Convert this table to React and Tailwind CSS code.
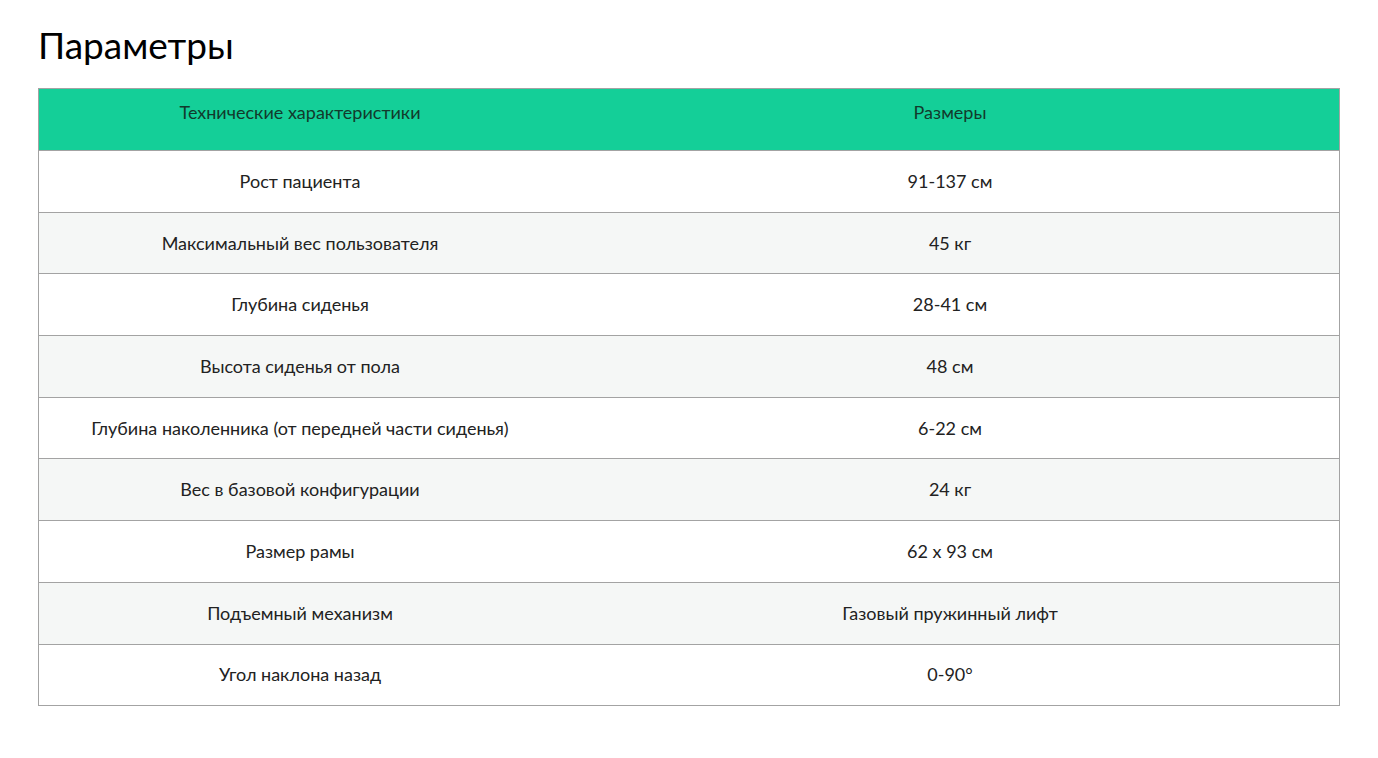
import React from "react";

const rows = [
  ["Рост пациента", "91-137 см"],
  ["Максимальный вес пользователя", "45 кг"],
  ["Глубина сиденья", "28-41 см"],
  ["Высота сиденья от пола", "48 см"],
  ["Глубина наколенника (от передней части сиденья)", "6-22 см"],
  ["Вес в базовой конфигурации", "24 кг"],
  ["Размер рамы", "62 x 93 см"],
  ["Подъемный механизм", "Газовый пружинный лифт"],
  ["Угол наклона назад", "0-90°"],
];

export default function App() {
  return (
    <div className="min-h-screen bg-white px-[38px] pt-[23px] font-['Lato',sans-serif] text-[#222]">
      <h1 className="text-[37px] leading-[44px] text-black">Параметры</h1>

      {/* table */}
      <div className="mt-[21px] border border-[#a3a3a3]">
        <div className="flex h-[61px] items-start bg-[#14cf98] pt-[10px] text-[18px] text-[#123a2c]">
          <div className="w-[522px] text-center">Технические характеристики</div>
          <div className="flex-1 text-center">Размеры</div>
        </div>
        {rows.map(([name, value], i) => (
          <div
            key={name}
            className={
              "flex h-[61.7px] items-center border-t border-[#a3a3a3] text-[18px] " +
              (i % 2 === 1 ? "bg-[#f5f7f6]" : "bg-white")
            }
          >
            <div className="w-[522px] text-center">{name}</div>
            <div className="flex-1 text-center">{value}</div>
          </div>
        ))}
      </div>
    </div>
  );
}
